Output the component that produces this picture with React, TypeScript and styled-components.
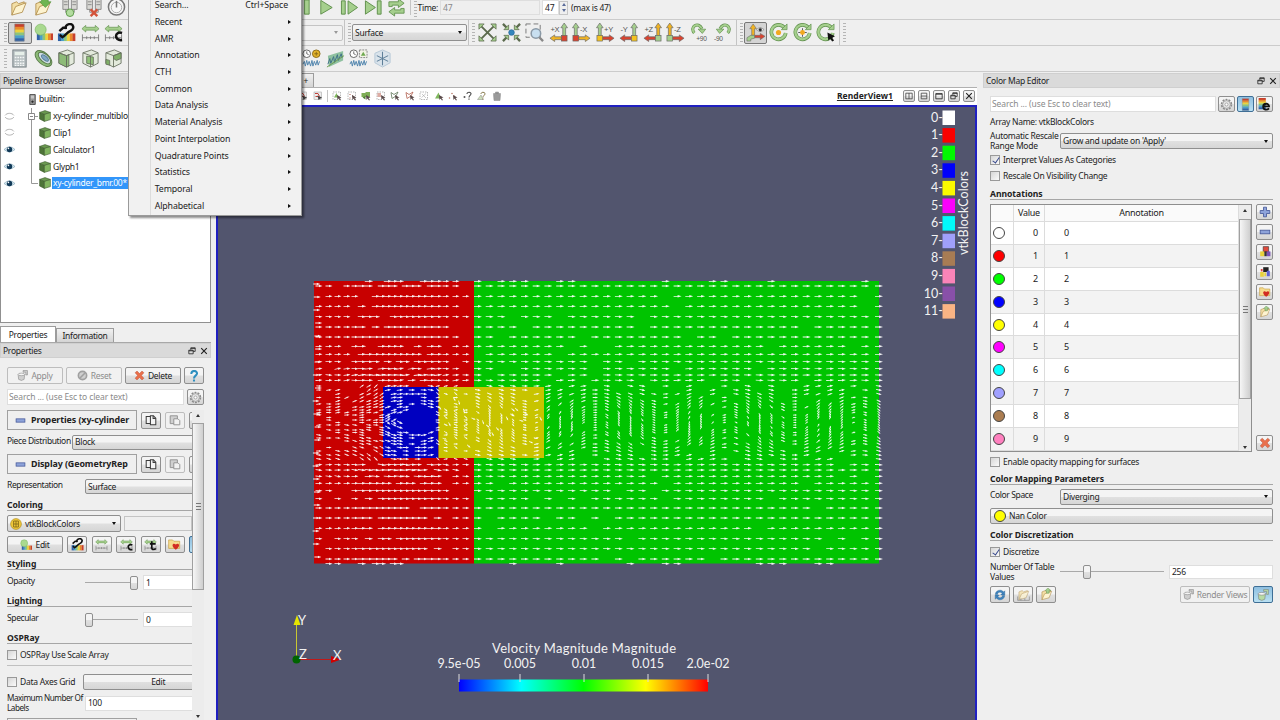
import { ReactNode } from 'react';
import styled, { createGlobalStyle, css } from 'styled-components';

/* ---------- icons ---------- */

const GREEN = '#a5cf8d';
const EDGE = '#5f8f4c';

const rainbow = ['#c8402c', '#e98a2c', '#ecd33c', '#8cc47a', '#4aa0c8', '#2f62a8'];

const folder = (
  <g stroke="#a8823c" strokeWidth=".8">
    <path d="M3 18V6l5-2 2 2 6-2v4" fill="#f3dfa6" />
    <path d="M3 18 7 9l11-4-4 10z" fill="#fdf3d0" />
  </g>
);

const servers = (
  <g stroke="#777" strokeWidth=".8" fill="#d8d8d4">
    <path d="M3 1h6v11H3zM12 1h6v11h-6z" />
    <path d="M4 4h4M4 7h4M13 4h4M13 7h4M6 12v3h9v-3" fill="none" />
  </g>
);

const bars = (x: number, y: number, w: number, h: number) => (
  <g>
    {rainbow.map((c, i) => (
      <rect key={c} x={x + (w / 6) * (5 - i)} y={y} width={w / 6 + 0.3} height={h} fill={c} />
    ))}
  </g>
);

const stack = (x: number, y: number, w: number, h: number) => (
  <g>
    {rainbow.map((c, i) => (
      <rect key={c} x={x} y={y + (h / 6) * i} width={w} height={h / 6 + 0.3} fill={c} />
    ))}
  </g>
);

const ruler = (
  <g stroke="#777" fill="none">
    <path d="M1.500 12v7M18.500 12v7M1.500 15.500h17M6 14v3M10 14v3M14 14v3" strokeWidth=".9" />
    <path d="M1 6 5 2.500v2h10v-2L19 6l-4 3.500v-2H5v2z" fill={GREEN} stroke={EDGE} strokeWidth=".7" />
  </g>
);

const gearPath = (
  <g fill="none" stroke="#8b8b8b">
    <circle cx="10" cy="10" r="7.500" strokeWidth="2.600" strokeDasharray="3 1.700" />
    <circle cx="10" cy="10" r="6" fill="#e4e4e4" />
    <circle cx="10" cy="10" r="2.300" fill="#fff" />
  </g>
);

const wave = (
  <path d="M1 16l1.500-3 1 5 1.500-6 1 5 1.500-4 1.500 5 1.500-6 1 6 1.500-5 1.500 4 1.500-5 1 5 1.500-4" fill="none" stroke="#4f84ad" strokeWidth="1" />
);

const clock = (
  <g fill="#fff" stroke="#555" strokeWidth=".9">
    <circle cx="5" cy="5" r="4" />
    <path d="M5 2.500V5l2 1" fill="none" />
  </g>
);

const axis = (label: string, flip: boolean, up: string, side: string, box: string) => (
  <g>
    <g transform={flip ? '' : 'translate(20 0) scale(-1 1)'} stroke="#666" strokeWidth=".7">
      <path d="M2.500 14V5H.500L4 0l3.500 5h-2v9z" fill={up} />
      <path d="M7 14.500h7v-2l5 3.500-5 3.500v-2H7z" fill={side} />
      <rect x="1" y="13" width="6" height="6" fill={box} />
    </g>
    <text x={flip ? 8.5 : 1.5} y="9" fontSize="8" fill="#555" fontFamily="Liberation Sans, sans-serif">
      {label}
    </text>
  </g>
);

const cube = (cut: ReactNode) => (
  <g stroke="#66705e" strokeWidth=".9" strokeLinejoin="round">
    <path d="M2 4 11 1l7 3v11l-8 4-8-4z" fill="#e3eadc" />
    {cut}
    <path d="M2 4l8 3 8-3M10 7v12" fill="none" />
  </g>
);

const spin = (
  <g>
    <path d="M16.500 5.500A7.600 7.600 0 1 0 17.600 10.500" fill="none" stroke={EDGE} strokeWidth="3.800" />
    <path d="M16.500 5.500A7.600 7.600 0 1 0 17.600 10.500" fill="none" stroke={GREEN} strokeWidth="2.400" />
    <path d="M13 7h6V1z" fill={GREEN} stroke={EDGE} strokeWidth=".7" />
  </g>
);

const pot = (fill: string) => (
  <g stroke="#777" strokeWidth=".9">
    <path d="M2 8h12l-1 9-5 2-5-2z" fill={fill} />
    <ellipse cx="8" cy="8" rx="6" ry="2.300" fill="#f4f4f4" />
    <path d="M11 1h8v8h-3V4h-5z" fill={fill} />
  </g>
);

const dashes = <path d="M2 2h15v15H2z" fill="none" strokeDasharray="3 2" stroke="#8a8a8a" strokeWidth="1.200" />;

const pointer = <path d="M10 8l9 5-4 1 3 4-2 1-3-4-2 3z" fill="#5a4a4a" />;

const ICONS: Record<string, ReactNode> = {
  open: folder,
  openGreen: (
    <g>
      {folder}
      <path d="M9 1h7v3h3l-6 6-6-6h2z" fill="#6fb552" stroke="#458c30" strokeWidth=".6" />
    </g>
  ),
  connect: (
    <g>
      {servers}
      <circle cx="10.500" cy="15.500" r="4" fill="#b3dca0" stroke="#5c9a47" />
    </g>
  ),
  disconnect: (
    <g>
      {servers}
      <path d="M7 12l7 7M14 12l-7 7" stroke="#d3533a" strokeWidth="2.600" />
    </g>
  ),
  timer: (
    <g fill="#f7f7f7" stroke="#777">
      <circle cx="10" cy="9.500" r="8.500" strokeWidth="1.600" />
      <circle cx="10" cy="10" r="5.500" stroke="#aaa" />
      <path d="M10 10V3" strokeWidth="1.600" />
    </g>
  ),
  pause: <path d="M3 2h5v15H3zM12 2h5v15h-5z" fill={GREEN} stroke={EDGE} />,
  play: <path d="M4 2.500 16 10 4 17z" fill={GREEN} stroke={EDGE} />,
  step: <path d="M1.500 3h4v14h-4zM8.500 3 18.500 10l-10 7z" fill={GREEN} stroke={EDGE} />,
  end: <path d="M1.500 3 12 10 1.500 17zM14 3h4v14h-4z" fill={GREEN} stroke={EDGE} />,
  loop: (
    <path d="M2 9V4h10V1l6 4.500-6 4.500V7.500H5.500V9zM18 11v5H8v3l-6-4.500L8 10v2.500h6.500V11z" fill={GREEN} stroke={EDGE} strokeWidth=".9" />
  ),
  colorbar: (
    <g>
      {stack(5, 1, 10, 18)}
      <path d="M5 1h10v18H5z" fill="none" stroke="#888" strokeWidth=".6" />
    </g>
  ),
  editColor: (
    <g>
      {bars(3, 11, 17, 7)}
      <circle cx="7" cy="7" r="5.800" fill="#a9d98f" stroke="#79b35e" strokeWidth=".7" />
    </g>
  ),
  question: (
    <g>
      {bars(1, 11, 18, 8)}
      <path d="M2.500 8.500l4-3.500h4M8.500 6.500C9 0 16 0 17 3.500s-2 4.500-5 6l-5.500 5M3 12.500l3.500 3" fill="none" stroke="#111" strokeWidth="2.500" />
    </g>
  ),
  range: ruler,
  rangeC: (
    <g>
      {ruler}
      <path d="M19 10.500c-8-2.500-9 8.500 0 7.500" fill="none" stroke="#111" strokeWidth="2.600" />
    </g>
  ),
  rangeT: (
    <g>
      {ruler}
      <path d="M12 5v10c0 4 5 3 6 1M9 9h9" fill="none" stroke="#111" strokeWidth="2.500" />
    </g>
  ),
  zoomOut: (
    <g fill={GREEN} stroke="#5c6b4e">
      <path d="M3 3l14 14M17 3 3 17" strokeWidth="2" />
      <path d="M1 1h5.500L1 6.500zM19 1v5.500L13.500 1zM1 19v-5.500L6.500 19zM19 19h-5.500l5.500-5.500z" strokeWidth=".8" />
    </g>
  ),
  zoomIn: (
    <g>
      <path d="M1 1l4 4M19 1l-4 4M1 19l4-4M19 19l-4-4" stroke="#5c6b4e" strokeWidth="2.500" />
      <path d="M7 7H2l5-5zM13 7V2l5 5zM7 13v5l-5-5zM13 13h5l-5 5z" fill={GREEN} stroke="#5c6b4e" strokeWidth=".8" />
      <circle cx="10" cy="10" r="3" fill="#3386bd" stroke="#20608c" strokeWidth=".6" />
    </g>
  ),
  magnify: (
    <g>
      <path d="M1 1h15v14H1z" fill="none" stroke="#777" strokeDasharray="5 3" />
      <circle cx="11.500" cy="11" r="5" fill="#c8dff0" stroke="#8a99a6" strokeWidth="1.600" />
      <path d="M15 15l4 4" stroke="#888" strokeWidth="2.500" />
    </g>
  ),
  px: axis('+X', false, GREEN, '#f0b323', '#d9432f'),
  mx: axis('-X', true, GREEN, '#f0b323', '#d9432f'),
  py: axis('+Y', true, GREEN, '#d9432f', '#f4c21e'),
  my: axis('-Y', false, GREEN, '#d9432f', '#f4c21e'),
  pz: axis('+Z', false, '#f0b323', '#d9432f', GREEN),
  mz: axis('-Z', true, '#f0b323', '#d9432f', GREEN),
  rotR: (
    <g>
      <path d="M4.500 10.500C-1 4 9-2 12.500 6" fill="none" stroke={EDGE} strokeWidth="3.200" />
      <path d="M4.500 10.500C-1 4 9-2 12.500 6" fill="none" stroke={GREEN} strokeWidth="2" />
      <path d="M8.500 6.500h8L13 11z" fill={GREEN} stroke={EDGE} strokeWidth=".7" />
      <text x="6.500" y="18.500" fontSize="7" fill="#555" fontFamily="Liberation Sans, sans-serif">+90</text>
    </g>
  ),
  rotL: (
    <g>
      <path d="M15.500 10.500C21 4 11-2 7.500 6" fill="none" stroke={EDGE} strokeWidth="3.200" />
      <path d="M15.500 10.500C21 4 11-2 7.500 6" fill="none" stroke={GREEN} strokeWidth="2" />
      <path d="M3.500 6.500h8L7 11z" fill={GREEN} stroke={EDGE} strokeWidth=".7" />
      <text x="1" y="18.500" fontSize="7" fill="#555" fontFamily="Liberation Sans, sans-serif">-90</text>
    </g>
  ),
  orient: (
    <g stroke="#666" strokeWidth=".6">
      <path d="M6 13V6H4l3.500-5L11 6H9v7z" fill="#f0b323" />
      <path d="M9 13h6v-2l5 3-5 3.500v-2H9z" fill="#d9432f" />
      <path d="M5 13h4v3l-4 1v2H1v-3.500z" fill={GREEN} />
      <path d="M11 7q4-4 8 0-4 4-8 0z" fill="#fff" />
      <circle cx="15" cy="7" r="1.600" fill="#222" />
    </g>
  ),
  centerShow: (
    <g>
      {spin}
      <circle cx="10" cy="10" r="2.700" fill="#f2a91f" />
    </g>
  ),
  centerReset: (
    <g>
      {spin}
      <path d="M10 5.500v9M5.500 10h9" stroke="#555" strokeWidth="1" />
      <circle cx="10" cy="10" r="2.600" fill="#f2a91f" />
    </g>
  ),
  centerPick: (
    <g>
      {spin}
      <path d="M12 10l8 4-3 1.500 2 3-2 1-2-3-2 2z" fill="#111" />
    </g>
  ),
  calc: (
    <g>
      <rect x="3" y="1" width="14" height="18" fill="#b8c0c2" stroke="#778084" />
      <rect x="5" y="3" width="10" height="3.500" fill="#e6efe9" />
      <path d="M5 9h10M5 12h10M5 15h10M5 17.200h10" stroke="#f4f6f6" strokeWidth="1.500" strokeDasharray="1.800 .900" />
    </g>
  ),
  contour: (
    <g strokeWidth="1">
      <ellipse cx="10" cy="10" rx="10.500" ry="6" transform="rotate(42 10 10)" fill="#8dbb78" stroke="#587a49" />
      <ellipse cx="11" cy="9.500" rx="8" ry="4" transform="rotate(42 11 9.500)" fill="#cfdde6" stroke="#587a49" />
      <ellipse cx="11.500" cy="9.500" rx="4.500" ry="2" transform="rotate(42 11.500 9.500)" fill="#7fa9c4" stroke="#5a7f97" />
    </g>
  ),
  clip: cube(<path d="M2 4l8 3v12l-8-4zM10 7l2.500-1v12L10 19z" fill="#8dbb78" />),
  slice: cube(<path d="M6 7.500l7 1v8l-7-1.500z" fill="#8fc277" />),
  threshold: cube(<path d="M10 7l8-3v6l-5 2-3-2zM2 11l4 1v5l-4-1z" fill="#7fb067" />),
  plotTime: (
    <g>
      {wave}
      {clock}
      <circle cx="15" cy="5" r="4" fill="#e3b32b" stroke="#8a6a1a" />
      <path d="M13 5h4M15 3v4" stroke="#8a6a1a" />
    </g>
  ),
  plotLine: (
    <g>
      <path d="M2 7 18 2v10L3 19z" fill="#8fc1a0" />
      <path d="M2 16l2-6 1 5 3-7 1 6 3-8 1 6 3-7 1 4" fill="none" stroke="#3d6f86" />
      <path d="M1 19 19 7" stroke="#6d9a4e" />
    </g>
  ),
  plotSel: (
    <g>
      {wave}
      {clock}
      <rect x="11" y="1" width="8" height="8" fill="#f3f3e6" stroke="#888" strokeDasharray="2 1" />
      <path d="M12.500 7 15 3l2.500 4z" fill="#6fa94f" />
    </g>
  ),
  probe: (
    <g fill="none" strokeWidth="1">
      <path d="M10 1l8 3.500v10L10 19l-8-4.500v-10z" fill="#d9e3eb" stroke="#b5c7d6" />
      <path d="M10 3v14M4 7l12 6M16 7 4 13" stroke="#5e7f99" strokeWidth="1.100" />
    </g>
  ),
  selGreen: <g>{dashes}<path d="M4 13l5-9 4 9z" fill="#7fb75d" />{pointer}</g>,
  selDots: <g>{dashes}<path d="M5 6h2v2H5zM10 9h2v2h-2zM5 13h2v2H5z" fill="#aa5544" />{pointer}</g>,
  selBlock: <g><path d="M1 4h7l2-2h8v10H1z" fill="#7fae57" /><path d="M3 13l6-3v7z" fill="#4d7d33" />{pointer}</g>,
  selRed: <g>{dashes}<path d="M3 5h7v2H3zM3 9h7v2H3z" fill="#bb5a4a" />{pointer}</g>,
  selPoly: <g><path d="M2 3l6 4 8-5-4 8-8 5z" fill="none" stroke="#61785a" strokeWidth="1.600" />{pointer}</g>,
  selPolyRed: <g><path d="M2 3l6 4 8-5-4 8-8 5z" fill="none" stroke="#b2604f" strokeWidth="1.600" />{pointer}</g>,
  selGray: <g>{dashes}<path d="M5 13 14 5M6 6l8 8" stroke="#999" /></g>,
  selTri: <g><path d="M2 15l7-12 5 12z" fill="#7fb75d" />{pointer}</g>,
  selPts: <g fill="#b5705e"><circle cx="3" cy="14" r="1.500" /><circle cx="8" cy="5" r="1.500" /><circle cx="12" cy="10" r="1.500" />{pointer}</g>,
  hoverPt: <g><circle cx="3" cy="12" r="2" fill="#555" /><path d="M8 6c0-5 9-4 8 0-.5 3-4 3-4 7m0 2v2.500" fill="none" stroke="#444" strokeWidth="2.200" /></g>,
  hoverCell: <g><path d="M1 17l7-9 4 9z" fill="#cde0b8" stroke="#888" /><path d="M8 6c0-5 9-4 8 0-.5 3-4 3-4 7m0 2v2.500" fill="none" stroke="#86794a" strokeWidth="2" /></g>,
  trash: <path d="M3 5h14v2l-1 12H4L3 7zM7 2h6v3H7z" fill="#9a9a9a" stroke="#888" />,
  viewRed: <g><rect x="2" y="2" width="15" height="15" fill="#eee" stroke="#999" /><path d="M4 5h6l3 6M5 11h5" fill="none" stroke="#c2413a" strokeWidth="2" /><path d="M9 9l9 4-7 5z" fill="#444" /></g>,
  minus: <rect x="2" y="7" width="16" height="6" fill="#8ea3da" stroke="#46599a" strokeWidth="1.400" />,
  plus: <path d="M7.500 2h5v5.500H18v5h-5.500V18h-5v-5.500H2v-5h5.500z" fill="#8ea3da" stroke="#46599a" strokeWidth="1.400" />,
  cross: <path d="M2 5 5.500 2 10 6.500 14.500 2 18 5l-4.500 5 4.500 5-3.500 3-4.500-4.500L5.500 18 2 15l4.500-5z" fill="#e9704c" stroke="#b84a30" strokeWidth=".8" />,
  ban: <g fill="none" stroke="#a0a0a0" strokeWidth="3"><circle cx="10" cy="10" r="7.500" fill="#cfcfcf" /><path d="M5 15 15 5" /></g>,
  potGray: pot('#cfcfcf'),
  potGreen: pot('#b7dba4'),
  help: <path d="M5.500 6.500c0-7 10-6 9.500-.5-.4 3.500-5 3.500-5 8M10 16v3" fill="none" stroke="#2f8fbf" strokeWidth="3.400" />,
  gear: gearPath,
  copy: <g fill="#f4f4f4" stroke="#3c3c3c" strokeWidth="1.700"><path d="M2 4h8v12H2z" /><path d="M9 3h5l4 4v11H9z" /><path d="M13.500 3v4.500H18" fill="none" /></g>,
  paste: <g fill="#d0d0d0" stroke="#8d8d8d" strokeWidth="1.500"><path d="M2 3h12v13H2z" /><path d="M8 8h7l3 3v7H8z" fill="#f2f2f2" /></g>,
  block: <g><circle cx="10" cy="10" r="9" fill="#efc83a" stroke="#a98416" /><path d="M6 5h8v10H6zM6 10h8M10 5v10" fill="none" stroke="#7d6212" strokeWidth="1.300" /></g>,
  heart: <g><path d="M1 3h6l2 2h9v11H1z" fill="#f6dc8e" stroke="#c29a3c" /><path d="M12 18C3 12 8 6 12 10c4-4 9 2 0 8z" fill="#d22d22" /></g>,
  colorE: (
    <g>
      {stack(1, 0, 11, 17)}
      <path d="M7 13h10c0-6-9-5-9 0 0 6 6 6 9 3" fill="none" stroke="#111" strokeWidth="2.800" />
    </g>
  ),
  squares: <g><path d="M7 1h9v9H7z" fill="#e04a3c" stroke="#333" /><path d="M2 9h7v8H2z" fill="#e8d23a" /><path d="M9 9h4v8H9z" fill="#333" /><path d="M13 9h6v8h-6z" fill="#7c52b8" /></g>,
  squaresDark: <g><path d="M7 2h9v8H7z" fill="#222" /><path d="M3 5h3v4H3z" fill="#d44" /><path d="M2 10h6v8H2zM9 11h3v6H9z" fill="#e8d23a" /><path d="M13 8h5v9h-5z" fill="#5f62d4" /></g>,
  folderOut: <g>{folder}<path d="M12 0l5 4h-3v4h-4V4H8z" fill={GREEN} stroke={EDGE} strokeWidth=".7" /></g>,
  rulerFolder: <g opacity=".75">{folder}<path d="M1 13v6h18v-6M6 16v3M12 16v3" fill="none" stroke="#666" /></g>,
  refresh: <path d="M2 9c1-8 11-9 14-4l2-2v7h-7l2.500-2.500C11 4 6 5 6 9zM18 11c-1 8-11 9-14 4l-2 2v-7h7l-2.500 2.500C9 16 14 15 14 11z" fill="#3f83bd" stroke="#2b6190" strokeWidth=".6" />,
  splitH: <path d="M2 3h16v14H2zM10 3v14" fill="none" stroke="#333" strokeWidth="1.800" />,
  splitV: <path d="M3 3h14v14H3zM3 10h14" fill="none" stroke="#333" strokeWidth="1.800" />,
  max: <path d="M2 4h16v13H2zM2 5.500h16" fill="none" stroke="#222" strokeWidth="2" />,
  float: <path d="M7 7V2h11v9h-5M7 3.500h11M2 8h11v9H2zM2 9.500h11" fill="none" stroke="#222" strokeWidth="2" />,
  close: <path d="M3 3l14 14M17 3 3 17" stroke="#222" strokeWidth="2.800" />,
  server: <g fill="#999" stroke="#333" strokeWidth="1.400"><path d="M5 1h10v18H5z" /><path d="M7 4h6M7 7h6" stroke="#eee" /><circle cx="10" cy="14" r="1.500" fill="#222" /></g>,
  box: <g stroke="#3f5c31" strokeWidth="1"><path d="M1 4 9 7v12l-8-4z" fill="#4d7438" /><path d="M9 7l10-3v12L9 19z" fill="#82b560" /><path d="M1 4l9-3 9 3-10 3z" fill="#6b9a50" /></g>,
  eyeOn: <g><path d="M0 10Q10 0 20 10 10 19 0 10z" fill="#d8ecf4" stroke="#7396a8" /><circle cx="10" cy="10" r="5" fill="#123a58" /><circle cx="8" cy="8" r="1.500" fill="#fff" /></g>,
  eyeOff: <path d="M2 8c3-5 13-5 16 0M2 11c3 5 13 5 16 0" fill="none" stroke="#999" strokeWidth="1.300" />,
};

const Icon = ({ name, size = 19 }: { name: string; size?: number }) => (
  <StIcon width={size} height={size} viewBox="0 0 20 20">
    {ICONS[name]}
  </StIcon>
);

/* ---------- toolbars ---------- */

const IconRow = ({ names }: { names: string[] }) => (
  <>
    {names.map((name) => (
      <StTool key={name}>
        <Icon name={name} />
      </StTool>
    ))}
  </>
);

const Toolbars = () => (
  <>
    <StBar $h={20}>
      <StBarStart $pad={7}>
        <IconRow names={['open', 'openGreen']} />
        <StDivider $gap={2} />
        <IconRow names={['connect', 'disconnect', 'timer']} />
      </StBarStart>
      <StBarRest $pad={291}>
        <IconRow names={['pause', 'play', 'step', 'end', 'loop']} />
        <StDivider $gap={1} />
        <StGrip />
        <StText>Time:</StText>
        <StField $w={100} $ml={2} $disabled>47</StField>
        <StField $w={17} $ml={2}>47</StField>
        <StSpinner><i /><i /></StSpinner>
        <StText>(max is 47)</StText>
      </StBarRest>
    </StBar>
    <StBar $h={26}>
      <StBarStart $pad={2}>
        <StGrip />
        <StTool $on><Icon name="colorbar" /></StTool>
        <IconRow names={['editColor', 'question', 'range', 'rangeC']} />
      </StBarStart>
      <StBarRest $pad={295}>
        <StCombo $w={48} $disabled />
        <StDivider $gap={1} />
        <StGrip />
        <StCombo $w={115} $h={17}>Surface</StCombo>
        <StDivider $gap={1} />
        <StGrip />
        <IconRow names={['zoomOut', 'zoomIn', 'magnify', 'px', 'mx', 'py', 'my', 'pz', 'mz', 'rotR', 'rotL']} />
        <StDivider $gap={1} />
        <StGrip />
        <StTool $on><Icon name="orient" /></StTool>
        <IconRow names={['centerShow', 'centerReset', 'centerPick']} />
        <StDivider $gap={1} />
        <StGrip />
      </StBarRest>
    </StBar>
    <StBar $h={26}>
      <StBarStart $pad={2}>
        <StGrip />
        <IconRow names={['calc', 'contour', 'clip', 'slice', 'threshold']} />
      </StBarStart>
      <StBarRest $pad={300}>
        <IconRow names={['plotTime', 'plotLine', 'plotSel', 'probe']} />
      </StBarRest>
    </StBar>
  </>
);

/* ---------- filters menu ---------- */

const filters = ['Recent', 'AMR', 'Annotation', 'CTH', 'Common', 'Data Analysis', 'Material Analysis', 'Point Interpolation', 'Quadrature Points', 'Statistics', 'Temporal', 'Alphabetical'];

const FiltersMenu = () => (
  <StMenu>
    <StMenuItem>
      Search...<StShortcut>Ctrl+Space</StShortcut>
    </StMenuItem>
    {filters.map((it) => (
      <StMenuItem key={it}>
        {it}
        <StArrow />
      </StMenuItem>
    ))}
  </StMenu>
);

/* ---------- left dock ---------- */

const sources = [
  { name: 'xy-cylinder_multibloc', visible: false },
  { name: 'Clip1', visible: false },
  { name: 'Calculator1', visible: true },
  { name: 'Glyph1', visible: true },
  { name: 'xy-cylinder_bmr.00*', visible: true, selected: true },
];

const DockHeader = ({ title }: { title: string }) => (
  <StDockHeader>
    <StText>{title}</StText>
    <StDockTools>
      <Icon name="float" size={8} />
      <Icon name="close" size={8} />
    </StDockTools>
  </StDockHeader>
);

const Pipeline = () => (
  <>
    <DockHeader title="Pipeline Browser" />
    <StTree>
      <StTreeRow>
        <StEye />
        <StBranch $root><Icon name="server" size={11} /></StBranch>
        <StText>builtin:</StText>
      </StTreeRow>
      {sources.map((it, idx) => (
        <StTreeRow key={it.name}>
          <StEye><Icon name={it.visible ? 'eyeOn' : 'eyeOff'} size={11} /></StEye>
          <StBranch>
            <svg width="15" height="17">
              <path d={idx === 4 ? 'M4.500 0V8.500H11' : idx === 0 ? 'M4.500 0V17M4.500 8.500H11' : 'M4.500 0V17'} fill="none" stroke="#999" />
              {idx === 0 && <path d="M1.500 5.500h6v6h-6zM3 8.500h3" fill="#fff" stroke="#888" />}
            </svg>
            <Icon name="box" size={12} />
          </StBranch>
          <StNode $selected={it.selected}>{it.name}</StNode>
        </StTreeRow>
      ))}
    </StTree>
  </>
);

const Section = ({ title }: { title: string }) => (
  <StSection>
    <StSectionButton>
      <Icon name="minus" size={11} />
      <span>{title}</span>
    </StSectionButton>
    <StButton $w={20} $h={17}><Icon name="copy" size={12} /></StButton>
    <StButton $w={20} $h={17} $disabled><Icon name="paste" size={12} /></StButton>
    <StButton $w={20} $h={17} />
  </StSection>
);

const Slider = ({ width, at }: { width: number; at: number }) => (
  <StSlider $w={width}>
    <StKnob style={{ marginLeft: at }} />
  </StSlider>
);

const Properties = () => (
  <>
    <StTabs>
      <StTab $w={56} $active>Properties</StTab>
      <StTab $w={58}>Information</StTab>
    </StTabs>
    <DockHeader title="Properties" />
    <StActions>
      <StButton $w={56} $h={17} $disabled><Icon name="potGray" size={11} />Apply</StButton>
      <StButton $w={56} $h={17} $disabled><Icon name="ban" size={11} />Reset</StButton>
      <StButton $w={56} $h={17}><Icon name="cross" size={11} />Delete</StButton>
      <StButton $w={20} $h={17}><Icon name="help" size={12} /></StButton>
    </StActions>
    <StSearch>
      <StField $w={177} $h={16} $hint>Search ... (use Esc to clear text)</StField>
      <StButton $w={17} $h={16}><Icon name="gear" size={13} /></StButton>
    </StSearch>
    <StScroll>
      <StForm>
        <Section title="Properties (xy-cylinder" />
        <StLine $h={24} $label={65}><StText $up>Piece Distribution</StText><StCombo $w={150} $h={15}>Block</StCombo></StLine>
        <Section title="Display (GeometryRep" />
        <StLine $h={25} $label={78}><StText $up>Representation</StText><StCombo $w={150} $h={15}>Surface</StCombo></StLine>
        <StHeading $h={12}>Coloring</StHeading>
        <StLine $h={25} $label={114}>
          <StCombo $w={114} $h={17}><Icon name="block" size={12} />vtkBlockColors</StCombo>
          <StBlank />
        </StLine>
        <StEditRow>
          <StButton $w={56} $h={17}><Icon name="editColor" size={12} />Edit</StButton>
          {['question', 'range', 'rangeC', 'rangeT', 'heart'].map((it) => (
            <StButton key={it} $w={20} $h={17}><Icon name={it} size={13} /></StButton>
          ))}
          <StButton $w={20} $h={17} $on />
        </StEditRow>
        <StHeading $h={17}>Styling</StHeading>
        <StLine $h={25} $label={78}><StText $up>Opacity</StText><Slider width={53} at={45} /><StField $w={90} $h={15} $ml={5}>1</StField></StLine>
        <StHeading $h={12}>Lighting</StHeading>
        <StLine $h={25} $label={78}><StText $up>Specular</StText><Slider width={53} at={0} /><StField $w={90} $h={15} $ml={5}>0</StField></StLine>
        <StHeading $h={12}>OSPRay</StHeading>
        <StLine $h={21}><StCheck /><StText>OSPRay Use Scale Array</StText></StLine>
        <StRule />
        <StLine $h={31}><StCheck /><StText>Data Axes Grid</StText><StButton $w={150} $h={16} $ml={8}>Edit</StButton></StLine>
        <StLine $h={12} $label={78}>
          <StTightText>Maximum Number Of<br />Labels</StTightText>
          <StField $w={150} $h={15}>100</StField>
        </StLine>
        <StTail><Section title="" /></StTail>
      </StForm>
      <StScrollbar $w={12} $top={13} $len={167}><i /><b /><u /></StScrollbar>
    </StScroll>
  </>
);

/* ---------- render view ---------- */

const hash = (a: number, b: number) => {
  const s = Math.sin(a * 12.9898 + b * 78.233) * 43758.5453;
  return s - Math.floor(s);
};

const arrow = (x: number, y: number, len: number, angle: number) => {
  const c = Math.cos(angle);
  const s = Math.sin(angle);
  const head = len * 0.5;
  const p = (u: number, v: number) => `${(x + u * c - v * s).toFixed(1)} ${(y + u * s + v * c).toFixed(1)}`;
  const h = len / 2;
  const w = len > 6 ? 1.3 : 0.9;
  return `M${p(-h, -0.4)}L${p(h - head, -0.4)}L${p(h - head, -w)}L${p(h, 0)}L${p(h - head, w)}L${p(h - head, 0.4)}L${p(-h, 0.4)}Z`;
};

const MID = 422.5;
const outer = [141.2, 136.5, 126.2, 116.2, 105.8, 95.5, 85.5, 76.2, 68.2, 60.8, 53.8, 47.5, 42.2];
const inner = [36.5, 32.5, 28.5, 25, 21.5, 18.5, 15.5, 12.5, 10, 7.5, 5, 2.5];
const offsets = [...outer, ...inner];
const rows = [...offsets.map((o) => MID - o), MID, ...offsets.map((o) => MID + o).reverse()];
const nearCols = [319, 329, 338, 347, 355, 362, 369, 376, 382, 388, 394, 400, 406, 412, 418, 424, 431, 438, 446, 456, 466];
const farCols = Array.from({ length: 35 }, (_, i) => 478 + i * 11.74);

const buildGlyphs = () => {
  let d = '';
  rows.forEach((y, r) => {
    const dy = y - MID;
    const edge = Math.abs(dy) > 140;
    const wake = Math.abs(dy) < 37;
    nearCols.forEach((x, c) => {
      const k = hash(r, c);
      if (edge ? k < 0.6 : wake ? k < 0.45 : k < 0.15) return;
      if (!wake) {
        d += arrow(x, y, c > 4 && c < 18 ? 8.5 : 7, Math.abs(dy) < 60 ? Math.sign(dy) * (hash(c, r) - 0.3) * 0.25 : 0);
      } else if (x < 384) {
        d += arrow(x, y, 5.5, (dy * (x - 310)) / 3600 + (k - 0.75) * 0.5);
      } else if (x < 438) {
        if (Math.hypot(x - 420, (dy + 2) * 1.4) < 20) return;
        d += arrow(x, y, 6.5, Math.atan2(-(x - 414) * 0.3, Math.abs(dy) + 8) * (dy < 0 ? -1 : 1));
      } else {
        d += arrow(x, y, 4.5, (k - 0.6) * 2);
      }
    });
    farCols.forEach((x, c) => {
      const k = hash(r + 90, c);
      if (edge ? k < 0.72 : wake ? k < 0.3 : k < 0.07) return;
      const swing = Math.sin((x - 530) / 21) * Math.exp(-((dy / 27) ** 2)) * 1.2;
      const len = wake ? 3.4 + 3 * (Math.abs(dy) / 37) : 8;
      d += arrow(c === 34 ? 879 : x, y, len, wake ? -swing : -swing * 0.6);
    });
  });
  for (let i = 0; i < 22; i++) {
    d += arrow(316 + hash(i, 3) * 3, 284 + i * 13, 7, 0);
    d += arrow(440 + i * 4.8, MID + (hash(i, 4) - 0.5) * 50, 4.5, 1.3 - hash(i, 8));
  }
  return d;
};

const glyphs = buildGlyphs();

const blockColors = ['#ffffff', '#fa0000', '#00fa00', '#0000fa', '#fafa00', '#fa00fa', '#00fafa', '#a0a0fa', '#a87c54', '#fa84b8', '#8850a8', '#fab484'];
const ticks = [
  { x: 459, label: '9.5e-05' },
  { x: 520, label: '0.005' },
  { x: 584, label: '0.01' },
  { x: 648, label: '0.015' },
  { x: 708, label: '2.0e-02' },
];

const Scene = () => (
  <StScene viewBox="218 107 757 613">
    <defs>
      <linearGradient id="velocity">
        <stop offset="0" stopColor="#00f" />
        <stop offset=".25" stopColor="#0ff" />
        <stop offset=".5" stopColor="#0f0" />
        <stop offset=".75" stopColor="#ff0" />
        <stop offset="1" stopColor="#f00" />
      </linearGradient>
    </defs>
    <rect x="314" y="281" width="160" height="282.500" fill="#c80000" />
    <rect x="474" y="281" width="405" height="282.500" fill="#00c400" />
    <rect x="383" y="387" width="55.500" height="71" fill="#0000c0" />
    <rect x="438.500" y="387" width="105.500" height="71" fill="#c8c400" />
    <path d={glyphs} fill="#fff" fillOpacity=".92" />
    {blockColors.map((color, idx) => (
      <g key={color}>
        <text x="943" y={121.5 + idx * 17.6} textAnchor="end" fontSize="12.500">{idx}-</text>
        <rect x="942.500" y={110.5 + idx * 17.6} width="12.500" height="14.500" fill={color} />
      </g>
    ))}
    <text transform="translate(968 255) rotate(-90)" fontSize="12.500" textLength="84">vtkBlockColors</text>
    <text x="492" y="653" fontSize="13" textLength="184">Velocity Magnitude Magnitude</text>
    <rect x="459" y="679.500" width="249" height="12" fill="url(#velocity)" />
    {ticks.map((it) => (
      <g key={it.label}>
        <text x={it.x} y="668" textAnchor="middle" fontSize="12.500">{it.label}</text>
        <path d={`M${it.x} 674v8`} stroke="#ddd" />
      </g>
    ))}
    <path d="M296.500 658V622" stroke="#c8c832" />
    <path d="M297 615l3.500 10h-7z" fill="#e6e600" />
    <path d="M299 659.500h33" stroke="#c01818" />
    <path d="M341 659.500 331 656v7z" fill="#d00000" />
    <circle cx="296.500" cy="659.500" r="4" fill="#006400" />
    <text x="298" y="625" fontSize="13">Y</text>
    <text x="299" y="659" fontSize="13">Z</text>
    <text x="333" y="660" fontSize="13">X</text>
  </StScene>
);

const viewTools = ['viewRed', 'viewRed', '', 'selGreen', 'selDots', 'selBlock', 'selRed', 'selPoly', 'selPolyRed', 'selGray', 'selTri', 'selPts', 'hoverPt', 'hoverCell', 'trash'];

const RenderView = () => (
  <StCenter>
    <StLayoutTabs><StTab $w={99}><StPlus>+</StPlus></StTab></StLayoutTabs>
    <StViewBar>
      <StViewTools>
        {viewTools.map((it, idx) =>
          it ? <StMini key={idx}><Icon name={it} size={10} /></StMini> : <StDivider key={idx} $gap={2} />
        )}
      </StViewTools>
      <StViewName>RenderView1</StViewName>
      {['splitH', 'splitV', 'max', 'float', 'close'].map((it) => (
        <StButton key={it} $w={12} $h={12}><Icon name={it} size={8} /></StButton>
      ))}
    </StViewBar>
    <StViewport><Scene /></StViewport>
  </StCenter>
);

/* ---------- color map editor ---------- */

const annotations = ['#ffffff', '#ff0000', '#00ff00', '#0000ff', '#ffff00', '#ff00ff', '#00ffff', '#a0a0ff', '#ab7d51', '#ff80bf'];

const ColorMapEditor = () => (
  <StRight>
    <DockHeader title="Color Map Editor" />
    <StEditor>
      <StEditorSearch>
        <StField $w={226} $h={16} $hint>Search ... (use Esc to clear text)</StField>
        <StButton $w={17} $h={16}><Icon name="gear" size={13} /></StButton>
        <StButton $w={17} $h={16} $on><Icon name="colorbar" size={13} /></StButton>
        <StButton $w={17} $h={16}><Icon name="colorE" size={13} /></StButton>
      </StEditorSearch>
      <StLine $h={17}><StText>Array Name: vtkBlockColors</StText></StLine>
      <StLine $h={22} $label={70}><StText $wrap>Automatic Rescale Range Mode</StText><StCombo $w={213} $h={16}>Grow and update on 'Apply'</StCombo></StLine>
      <StLine $h={16}><StCheck $on /><StText>Interpret Values As Categories</StText></StLine>
      <StLine $h={16}><StCheck /><StText>Rescale On Visibility Change</StText></StLine>
      <StHeading $h={16}>Annotations</StHeading>
      <StTableArea>
        <StTable>
          <StGrid>
            <StTableRow $head><span /><span>Value</span><span>Annotation</span></StTableRow>
            {annotations.map((color, idx) => (
              <StTableRow key={color}>
                <span><StDot $color={color} /></span>
                <span>{idx}</span>
                <span>{idx}</span>
              </StTableRow>
            ))}
          </StGrid>
          <StScrollbar $w={12} $top={14} $len={180}><i /><b /><u /></StScrollbar>
        </StTable>
        <StTableTools>
          {['plus', 'minus', 'squares', 'squaresDark', 'heart', 'folderOut'].map((it) => (
            <StButton key={it} $w={17} $h={16}><Icon name={it} size={12} /></StButton>
          ))}
          <StPushDown><StButton $w={17} $h={16}><Icon name="cross" size={12} /></StButton></StPushDown>
        </StTableTools>
      </StTableArea>
      <StLine $h={20}><StCheck /><StText>Enable opacity mapping for surfaces</StText></StLine>
      <StHeading $h={13}>Color Mapping Parameters</StHeading>
      <StLine $h={23} $label={70}><StText $up>Color Space</StText><StCombo $w={213} $h={16}>Diverging</StCombo></StLine>
      <StNan><StDot $color="#ffff00" />Nan Color</StNan>
      <StHeading $h={17}>Color Discretization</StHeading>
      <StLine $h={22}><StCheck $on /><StText>Discretize</StText></StLine>
      <StLine $h={17} $label={70}><StText $wrap>Number Of Table Values</StText><Slider width={104} at={23} /><StField $w={104} $h={14} $ml={5}>256</StField></StLine>
      <StFooter>
        <StButton $w={20} $h={17}><Icon name="refresh" size={12} /></StButton>
        <StButton $w={20} $h={17}><Icon name="rulerFolder" size={13} /></StButton>
        <StButton $w={20} $h={17}><Icon name="folderOut" size={13} /></StButton>
        <StGrow />
        <StButton $w={70} $h={17} $disabled><Icon name="potGray" size={11} />Render Views</StButton>
        <StButton $w={20} $h={17} $on><Icon name="potGreen" size={12} /></StButton>
      </StFooter>
    </StEditor>
  </StRight>
);

const App = () => {
  return (
    <StPage>
      <GlobalStyle />
      <Toolbars />
      <StMain>
        <StLeft>
          <Pipeline />
          <Properties />
        </StLeft>
        <RenderView />
        <ColorMapEditor />
      </StMain>
      <FiltersMenu />
    </StPage>
  );
};

export default App;

const GlobalStyle = createGlobalStyle`
  * {
    box-sizing: border-box;
  }

  body {
    margin: 0;
    overflow: hidden;
    color: #222;
    font: 8.5px/10px 'Noto Sans', sans-serif;
    letter-spacing: -0.27px;
  }
`;

const face = css`
  border: 1px solid #8f8f8f;
  border-radius: 2px;
  background: linear-gradient(#f4f4f4 0 48%, #e0e0e0 52%, #d6d6d6);
`;

const StPage = styled.div`
  position: relative;
  display: flex;
  flex-direction: column;
  width: 1280px;
  height: 720px;
  overflow: hidden;
  background: #efefef;
`;

const StIcon = styled.svg`
  flex: none;
  display: block;
`;

const StText = styled.span<{ $wrap?: boolean; $up?: boolean }>`
  padding-bottom: ${({ $up }) => ($up ? 3 : 0)}px;
  letter-spacing: ${({ $up }) => ($up ? -0.38 : -0.27)}px;
  white-space: ${({ $wrap }) => ($wrap ? 'normal' : 'nowrap')};
`;

const StTightText = styled.span`
  font-size: 8.2px;
  letter-spacing: -0.5px;
  white-space: nowrap;
`;

const StGrow = styled.div`
  flex: 1;
`;

const StBar = styled.div<{ $h: number }>`
  display: flex;
  flex: none;
  height: ${({ $h }) => $h}px;
  border-bottom: 1px solid #cbcbcb;

  &:first-child {
    align-items: flex-start;
  }

  &:first-child > div {
    height: 15px;
  }
`;

const StBarStart = styled.div<{ $pad: number }>`
  display: flex;
  flex: none;
  align-items: center;
  width: 128px;
  padding-left: ${({ $pad }) => $pad}px;
`;

const StBarRest = styled.div<{ $pad: number }>`
  display: flex;
  align-items: center;
  margin-left: ${({ $pad }) => $pad - 128}px;
`;

const StTool = styled.div<{ $on?: boolean }>`
  display: flex;
  flex: none;
  justify-content: center;
  align-items: center;
  width: 23.5px;
  height: 22px;
  border-radius: 2px;
  ${({ $on }) =>
    $on &&
    css`
      border: 1px solid #777;
      background: #d4d4d4;
    `}
`;

const StDivider = styled.div<{ $gap: number }>`
  align-self: stretch;
  width: 1px;
  margin: 0 ${({ $gap }) => $gap}px;
  background: #c4c4c4;
`;

const StGrip = styled.div`
  flex: none;
  width: 3px;
  height: 20px;
  margin: 0 1px 0 2px;
  background: repeating-linear-gradient(#b5b5b5 0 1px, transparent 1px 3px);
`;

const StField = styled.div<{ $w: number; $h?: number; $ml?: number; $disabled?: boolean; $hint?: boolean }>`
  display: flex;
  flex: none;
  align-items: center;
  width: ${({ $w }) => $w}px;
  height: ${({ $h = 15 }) => $h}px;
  margin-left: ${({ $ml = 0 }) => $ml}px;
  padding-left: ${({ $hint }) => ($hint ? 1 : 2)}px;
  border: 1px solid #dedede;
  background: ${({ $disabled }) => ($disabled ? '#efefef' : '#fff')};
  color: ${({ $disabled, $hint }) => ($disabled || $hint ? '#8a8a8a' : '#222')};
  letter-spacing: ${({ $hint }) => ($hint ? -0.1 : -0.27)}px;
  white-space: nowrap;
`;

const StSpinner = styled.div`
  display: flex;
  flex-direction: column;
  justify-content: space-around;
  align-items: center;
  width: 9px;
  height: 14px;
  margin-right: 3px;
  border: 1px solid #c6c6c6;

  i {
    border: 2px solid transparent;
    border-top: 0;
    border-bottom: 3px solid #5b6c9a;
  }

  i + i {
    transform: rotate(180deg);
  }
`;

const StCombo = styled.div<{ $w: number; $h?: number; $disabled?: boolean }>`
  display: flex;
  flex: none;
  align-items: center;
  gap: 3px;
  width: ${({ $w }) => $w}px;
  height: ${({ $h = 16 }) => $h}px;
  padding: 0 4px 0 2px;
  ${face}
  ${({ $disabled }) => $disabled && 'background: #f1f1f1; border-color: #c4c4c4;'}
  white-space: nowrap;

  &::after {
    content: '';
    margin-left: auto;
    border: 2.5px solid transparent;
    border-top: 3.5px solid ${({ $disabled }) => ($disabled ? '#999' : '#111')};
    border-bottom: 0;
  }
`;

const StButton = styled.div<{ $w: number; $h: number; $ml?: number; $disabled?: boolean; $on?: boolean }>`
  display: flex;
  flex: none;
  justify-content: center;
  align-items: center;
  gap: 3px;
  width: ${({ $w }) => $w}px;
  height: ${({ $h }) => $h}px;
  margin-left: ${({ $ml = 0 }) => $ml}px;
  ${face}
  ${({ $disabled }) => $disabled && 'background: #f1f1f1; border-color: #bdbdbd; color: #8c8c8c;'}
  ${({ $on }) => $on && 'background: linear-gradient(#8fbfe0, #b9e0f2); border-color: #3f6f96;'}
`;

const StMenu = styled.div`
  position: absolute;
  top: -4px;
  left: 128px;
  width: 174px;
  height: 220px;
  border: 1px solid #9a9a9a;
  background: linear-gradient(90deg, #f1f1f1 0 21px, #dcdcdc 21px 22px, #f1f1f1 22px);
  box-shadow: 2px 2px 2px rgba(0, 0, 0, 0.45);
  font-size: 8.8px;
  letter-spacing: -0.13px;
`;

const StMenuItem = styled.div`
  display: flex;
  justify-content: space-between;
  align-items: center;
  height: 16.7px;
  padding: 0 10px 0 25.7px;
`;

const StShortcut = styled.span`
  margin-right: 3px;
`;

const StArrow = styled.i`
  border: 2.5px solid transparent;
  border-left: 3.5px solid #111;
  border-right: 0;
`;

const StMain = styled.div`
  display: flex;
  flex: 1;
  min-height: 0;
`;

const StLeft = styled.div`
  display: flex;
  flex: none;
  flex-direction: column;
  width: 211px;
  padding-top: 1px;
`;

const StDockHeader = styled.div`
  display: flex;
  flex: none;
  justify-content: space-between;
  align-items: center;
  height: 15px;
  padding: 0 2px;
  border: 1px solid #cfcfcf;
  background: #dadada;
`;

const StDockTools = styled.div`
  display: flex;
  gap: 4px;
`;

const StTree = styled.div`
  flex: none;
  height: 235px;
  padding-top: 2px;
  border: 1px solid #909090;
  background: #fff;
`;

const StTreeRow = styled.div`
  display: flex;
  align-items: center;
  height: 16.8px;
`;

const StEye = styled.div`
  width: 26px;
  padding-left: 3px;
`;

const StBranch = styled.div<{ $root?: boolean }>`
  display: flex;
  align-items: center;
  width: ${({ $root }) => ($root ? 12 : 25)}px;

  svg + svg {
    margin-left: -3px;
  }
`;

const StNode = styled.span<{ $selected?: boolean }>`
  padding: 1px;
  white-space: nowrap;
  ${({ $selected }) => $selected && 'width: 120px; color: #fff; background: #3296fa;'}
`;

const StTabs = styled.div`
  display: flex;
  flex: none;
  align-items: flex-end;
  height: 20px;
  border-bottom: 1px solid #a8a8a8;
`;

const StTab = styled.div<{ $w: number; $active?: boolean }>`
  display: flex;
  justify-content: center;
  align-items: center;
  width: ${({ $w }) => $w}px;
  height: ${({ $active }) => ($active ? 16 : 14)}px;
  border: 1px solid #9c9c9c;
  border-bottom: 0;
  background: ${({ $active }) => ($active ? '#fff' : 'linear-gradient(#f0f0f0, #d4d4d4)')};
`;

const StActions = styled.div`
  display: flex;
  flex: none;
  gap: 3px;
  padding: 9px 0 0 7px;
`;

const StSearch = styled.div`
  display: flex;
  flex: none;
  gap: 3px;
  padding: 5px 0 5px 7px;
`;

const StScroll = styled.div`
  display: flex;
  flex: 1;
  min-height: 0;
  padding-left: 7px;
`;

const StForm = styled.div`
  width: 185px;
  overflow: hidden;
`;

const StSection = styled.div`
  display: flex;
  align-items: center;
  gap: 4px;
  height: 20px;
`;

const StSectionButton = styled.div`
  display: flex;
  flex: none;
  align-items: center;
  gap: 5px;
  width: 130px;
  height: 20px;
  padding: 0 7px;
  border: 1px solid #a0a0a0;
  font-weight: bold;
  font-size: 8.9px;
  letter-spacing: -0.08px;
  white-space: nowrap;
`;

const StLine = styled.div<{ $h: number; $label?: number }>`
  display: flex;
  align-items: center;
  height: ${({ $h }) => $h}px;

  > :first-child {
    flex: none;
    ${({ $label }) => $label && `width: ${$label}px;`}
  }
`;

const StHeading = styled.div<{ $h: number }>`
  display: flex;
  align-items: flex-end;
  height: ${({ $h }) => $h}px;
  border-bottom: 1px solid #a6a6a6;
  font-weight: bold;
  font-size: 8.6px;
  letter-spacing: -0.03px;
`;

const StRule = styled.div`
  border-top: 1px solid #c0c0c0;
`;

const StBlank = styled.div`
  width: 80px;
  height: 15px;
  margin-left: 3px;
  border: 1px solid #c4c4c4;
`;

const StEditRow = styled.div`
  display: flex;
  gap: 4.4px;
`;

const StSlider = styled.div<{ $w: number }>`
  flex: none;
  width: ${({ $w }) => $w}px;
  background: linear-gradient(#a9a9a9, #a9a9a9) center / 100% 1px no-repeat;
`;

const StKnob = styled.div`
  width: 8px;
  height: 14px;
  ${face}
`;

const StCheck = styled.div<{ $on?: boolean }>`
  width: 10px;
  height: 10px;
  margin-right: 3px;
  border: 1px solid #999;
  background: linear-gradient(135deg, #d6d6d6, #fafafa);

  ${({ $on }) =>
    $on &&
    css`
      &::after {
        content: '';
        display: block;
        width: 3px;
        height: 6px;
        margin: 0 0 0 3px;
        border: solid #35478c;
        border-width: 0 1.5px 1.5px 0;
        transform: rotate(35deg);
      }
    `}
`;

const StTail = styled.div`
  margin-top: 9px;
`;

const StScrollbar = styled.div<{ $w: number; $top: number; $len: number }>`
  display: flex;
  flex: none;
  flex-direction: column;
  align-items: center;
  width: ${({ $w }) => $w}px;
  background: #ececec;

  i {
    height: ${({ $top }) => $top}px;

    &::after {
      content: '';
      display: block;
      margin-top: 4px;
      border: 2.5px solid transparent;
      border-top: 0;
      border-bottom: 3px solid #333;
    }
  }

  b {
    display: flex;
    justify-content: center;
    align-items: center;
    width: 100%;
    height: ${({ $len }) => $len}px;
    border: 1px solid #a0a0a0;
    background: linear-gradient(90deg, #f6f6f6, #cfcfcf);

    &::after {
      content: '';
      width: 5px;
      height: 7px;
      background: repeating-linear-gradient(#777 0 1px, transparent 1px 3px);
    }
  }

  u {
    margin: auto 0 2px;
    border: 2.5px solid transparent;
    border-top: 3px solid #333;
    border-bottom: 0;
  }
`;

const StCenter = styled.div`
  display: flex;
  flex: none;
  flex-direction: column;
  width: 762px;
  margin-left: 4px;
`;

const StLayoutTabs = styled.div`
  display: flex;
  flex: none;
  align-items: flex-end;
  height: 16px;
  border-bottom: 1px solid #b0b0b0;
`;

const StPlus = styled.span`
  margin: 0 5px 0 auto;
`;

const StViewBar = styled.div`
  display: flex;
  flex: none;
  align-items: center;
  gap: 3px;
  height: 17px;
  padding: 0 2px 1px 0;
  background: #fff;
`;

const StViewTools = styled.div`
  display: flex;
  align-items: center;
  height: 12px;
  margin-left: 81px;
`;

const StMini = styled.div`
  width: 14.5px;
  padding-left: 2px;
`;

const StViewName = styled.div`
  margin: 0 7px 0 auto;
  font-weight: bold;
  letter-spacing: 0.05px;
  text-decoration: underline;
`;

const StViewport = styled.div`
  flex: 1;
  min-height: 0;
  margin-left: 1px;
  border: solid #2020c0;
  border-width: 2px 2px 0;
  background: #52556e;
`;

const StScene = styled.svg`
  display: block;
  width: 757px;
  height: 613px;
  fill: #f2f2f2;
  font-family: Lato, sans-serif;
  letter-spacing: 0;
`;

const StRight = styled.div`
  flex: 1;
  min-width: 0;
  margin-left: 6px;
  padding-top: 1px;
`;

const StEditor = styled.div`
  padding: 8px 7px 0;
`;

const StEditorSearch = styled.div`
  display: flex;
  gap: 2px;
  margin-bottom: 1px;
`;

const StTableArea = styled.div`
  display: flex;
  justify-content: space-between;
  height: 248px;
  margin: 4px 0 0;
`;

const StTable = styled.div`
  display: flex;
  width: 262px;
  border: 1px solid #8e8e8e;
  background: #fff;
`;

const StGrid = styled.div`
  flex: 1;
`;

const StTableRow = styled.div<{ $head?: boolean }>`
  display: grid;
  grid-template-columns: 23px 31px 1fr;
  height: ${({ $head }) => ($head ? 17 : 22.9)}px;
  font-size: 9px;

  &:nth-child(odd) {
    background: ${({ $head }) => ($head ? '#fafafa' : '#f3f3f3')};
  }

  span {
    display: flex;
    align-items: center;
    border: solid #dcdcdc;
    border-width: 0 1px 1px 0;
  }

  span:first-child {
    padding-left: 2px;
  }

  span:nth-child(2) {
    justify-content: ${({ $head }) => ($head ? 'center' : 'flex-end')};
    padding-right: ${({ $head }) => ($head ? 0 : 6)}px;
  }

  span:nth-child(3) {
    justify-content: ${({ $head }) => ($head ? 'center' : 'flex-start')};
    padding-left: ${({ $head }) => ($head ? 0 : 19)}px;
  }
`;

const StDot = styled.i<{ $color: string }>`
  width: 12px;
  height: 12px;
  border: 1px solid #444;
  border-radius: 50%;
  background: ${({ $color }) => $color};
`;

const StTableTools = styled.div`
  display: flex;
  flex-direction: column;
  gap: 4px;
`;

const StPushDown = styled.div`
  margin: auto 0 1px;
`;

const StNan = styled.div`
  display: flex;
  align-items: center;
  gap: 3px;
  height: 16px;
  padding-left: 3px;
  ${face}
`;

const StFooter = styled.div`
  display: flex;
  gap: 3px;
  margin-top: 6px;
`;
